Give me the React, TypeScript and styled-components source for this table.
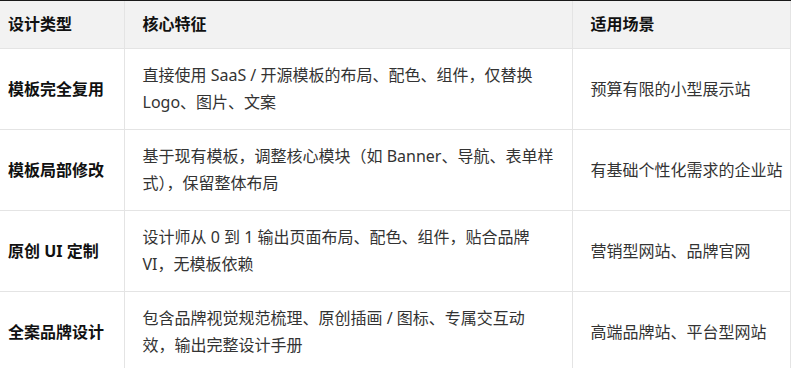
import React from 'react';
import styled, { createGlobalStyle } from 'styled-components';

const GlobalStyle = createGlobalStyle`
  body {
    margin: 0;
    background: #ffffff;
    font-family: 'Segoe UI', 'Noto Sans', 'Noto Sans CJK SC', sans-serif;
  }
`;

const Wrapper = styled.div`
  width: 791px;
  overflow: hidden;
  border-top: 1px solid #1a1a1a;
`;

const Table = styled.table`
  width: 790px;
  border-collapse: collapse;
  table-layout: fixed;
  font-family: 'Noto Sans', 'Noto Sans CJK SC', sans-serif;
  font-size: 16px;
  line-height: 27px;
`;

interface CellProps {
  $first?: boolean;
  $last?: boolean;
}

const HeadCell = styled.th<CellProps>`
  background: #f2f2f2;
  color: #111111;
  font-weight: 700;
  text-align: left;
  padding: 10px 18px 10px ${({ $first }) => ($first ? '8px' : '18px')};
  border-bottom: 1px solid #e4e4e4;
  border-left: ${({ $first }) => ($first ? 'none' : '1px solid #e4e4e4')};
  border-right: 1px solid #e4e4e4;
`;

const Cell = styled.td<CellProps>`
  color: ${({ $first }) => ($first ? '#111111' : '#333333')};
  font-weight: ${({ $first }) => ($first ? 700 : 400)};
  white-space: ${({ $last }) => ($last ? 'nowrap' : 'normal')};
  vertical-align: middle;
  padding: 13px ${({ $last }) => ($last ? '4px' : '18px')} 13px
    ${({ $first }) => ($first ? '8px' : '18px')};
  border-bottom: 1px solid #e4e4e4;
  border-left: ${({ $first }) => ($first ? 'none' : '1px solid #e4e4e4')};
  border-right: 1px solid #e4e4e4;
`;

interface Row {
  type: string;
  feature: React.ReactNode;
  scene: string;
}

const rows: Row[] = [
  {
    type: '模板完全复用',
    feature: (
      <>
        直接使用 SaaS / 开源模板的布局、配色、组件，仅替换
        <br />
        Logo、图片、文案
      </>
    ),
    scene: '预算有限的小型展示站',
  },
  {
    type: '模板局部修改',
    feature: (
      <>
        基于现有模板，调整核心模块（如 Banner、导航、表单样
        <br />
        式），保留整体布局
      </>
    ),
    scene: '有基础个性化需求的企业站',
  },
  {
    type: '原创 UI 定制',
    feature: (
      <>
        设计师从 0 到 1 输出页面布局、配色、组件，贴合品牌
        <br />
        VI，无模板依赖
      </>
    ),
    scene: '营销型网站、品牌官网',
  },
  {
    type: '全案品牌设计',
    feature: (
      <>
        包含品牌视觉规范梳理、原创插画 / 图标、专属交互动
        <br />
        效，输出完整设计手册
      </>
    ),
    scene: '高端品牌站、平台型网站',
  },
];

const App = () => (
  <>
    <GlobalStyle />
    <Wrapper>
      <Table>
        <colgroup>
          <col style={{ width: 124 }} />
          <col style={{ width: 448 }} />
          <col style={{ width: 218 }} />
        </colgroup>
        <thead>
          <tr>
            <HeadCell $first>设计类型</HeadCell>
            <HeadCell>核心特征</HeadCell>
            <HeadCell>适用场景</HeadCell>
          </tr>
        </thead>
        <tbody>
          {rows.map((row) => (
            <tr key={row.type}>
              <Cell $first>{row.type}</Cell>
              <Cell>{row.feature}</Cell>
              <Cell $last>{row.scene}</Cell>
            </tr>
          ))}
        </tbody>
      </Table>
    </Wrapper>
  </>
);

export default App;
